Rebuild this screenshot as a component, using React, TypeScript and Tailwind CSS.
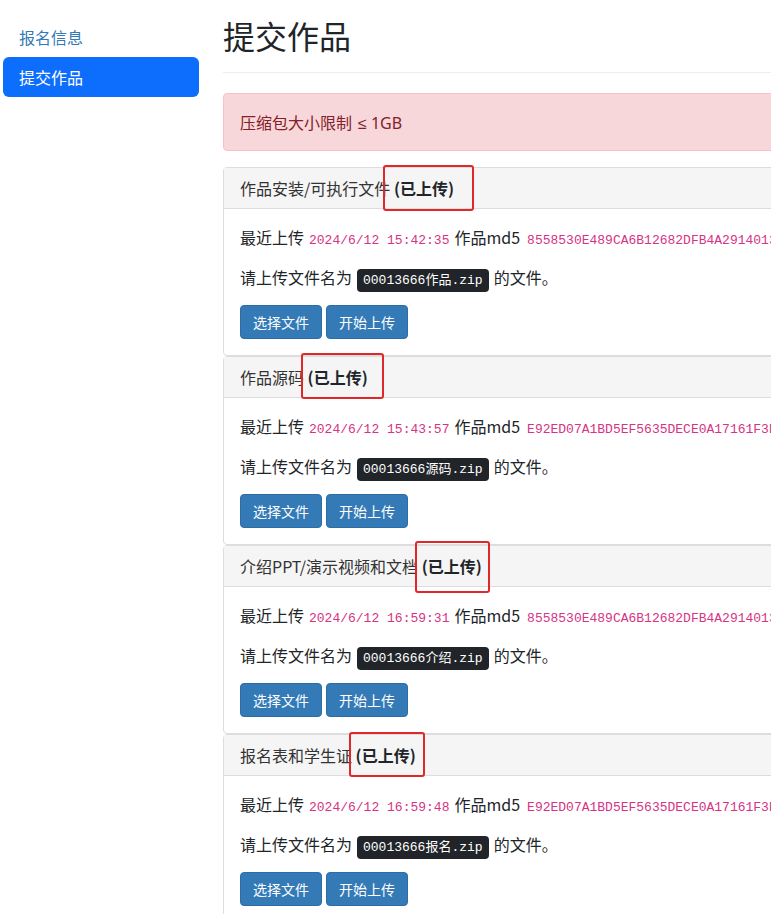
const cjk = '"Noto Sans CJK SC", "Noto Sans", sans-serif'
const mono = '"Liberation Mono", "Noto Sans CJK SC", monospace'

type Item = {
  title: string
  time: string
  md5: string
  file: string
  box: string
}

const items: Item[] = [
  {
    title: '作品安装/可执行文件',
    time: '2024/6/12 15:42:35',
    md5: '8558530E489CA6B12682DFB4A2914013',
    file: '00013666作品.zip',
    box: '-left-[11px] -right-[20px] -top-[11px] -bottom-[11px]',
  },
  {
    title: '作品源码',
    time: '2024/6/12 15:43:57',
    md5: 'E92ED07A1BD5EF5635DECE0A17161F3D',
    file: '00013666源码.zip',
    box: '-left-[7px] -right-[16px] -top-[12px] -bottom-[10px]',
  },
  {
    title: '介绍PPT/演示视频和文档',
    time: '2024/6/12 16:59:31',
    md5: '8558530E489CA6B12682DFB4A2914013',
    file: '00013666介绍.zip',
    box: '-left-[7px] -right-[8px] -top-[13px] -bottom-[15px]',
  },
  {
    title: '报名表和学生证',
    time: '2024/6/12 16:59:48',
    md5: 'E92ED07A1BD5EF5635DECE0A17161F3D',
    file: '00013666报名.zip',
    box: '-left-[7px] -right-[9px] -top-[11px] -bottom-[10px]',
  },
]

function UploadCard({ item }: { item: Item }) {
  return (
    <div className="rounded-[4px] border border-[#dddddd] bg-white">
      <div className="border-b border-[#dddddd] bg-[#f5f5f5] px-4 py-2 leading-6 text-[#333333]">
        {item.title}{' '}
        <span className="relative font-bold text-[#212529]">
          (已上传)
          <span
            className={`pointer-events-none absolute rounded-[3px] border-2 border-[#e0282b] ${item.box}`}
          />
        </span>
      </div>
      <div className="p-4 text-[#212529]">
        <p className="mb-4 h-6 whitespace-nowrap leading-6">
          最近上传
          <code className="mx-[5px] text-[13px] leading-none text-[#d63384]" style={{ fontFamily: mono }}>
            {item.time}
          </code>
          作品md5
          <code className="ml-[7px] text-[13px] leading-none text-[#d63384]" style={{ fontFamily: mono }}>
            {item.md5}
          </code>
        </p>
        <p className="mb-4 h-6 leading-6">
          请上传文件名为
          <kbd
            className="mx-[5px] rounded-[4px] bg-[#212529] px-[6px] py-[4px] text-[13px] leading-none text-white"
            style={{ fontFamily: mono }}
          >
            {item.file}
          </kbd>
          的文件。
        </p>
        <div className="flex gap-1">
          <button className="rounded-[4px] border border-[#2e6da4] bg-[#337ab7] px-3 py-1.5 text-sm leading-5 text-white">
            选择文件
          </button>
          <button className="rounded-[4px] border border-[#2e6da4] bg-[#337ab7] px-3 py-1.5 text-sm leading-5 text-white">
            开始上传
          </button>
        </div>
      </div>
    </div>
  )
}

export default function App() {
  return (
    <div
      className="h-[914px] w-[771px] overflow-hidden bg-white text-base text-[#212529]"
      style={{ fontFamily: cjk }}
    >
      <div className="flex">
        <nav className="ml-[3px] mt-[17px] flex w-[196px] shrink-0 flex-col">
          <a className="px-4 py-2 leading-6 text-[#337ab7]">报名信息</a>
          <a className="rounded-[6px] bg-[#0d6efd] px-4 py-2 leading-6 text-white">提交作品</a>
        </nav>
        <main className="ml-[24px] w-[640px] shrink-0">
          <div className="mt-[16px] border-b border-[#eeeeee] pb-[18px]">
            <h1 className="text-[32px] leading-[38px] font-normal">提交作品</h1>
          </div>
          <div className="mt-5 mb-4 rounded-[4px] border border-[#f5c2c7] bg-[#f8d7da] p-4 text-[#842029]">
            <div className="h-6 leading-6">
              压缩包大小限制
              <span className="ml-[6px] leading-none" style={{ fontFamily: '"Noto Sans", sans-serif' }}>
                ≤ 1GB
              </span>
            </div>
          </div>
          <div className="flex flex-col">
            {items.map((item, idx) => (
              <UploadCard key={idx} item={item} />
            ))}
          </div>
        </main>
      </div>
    </div>
  )
}
